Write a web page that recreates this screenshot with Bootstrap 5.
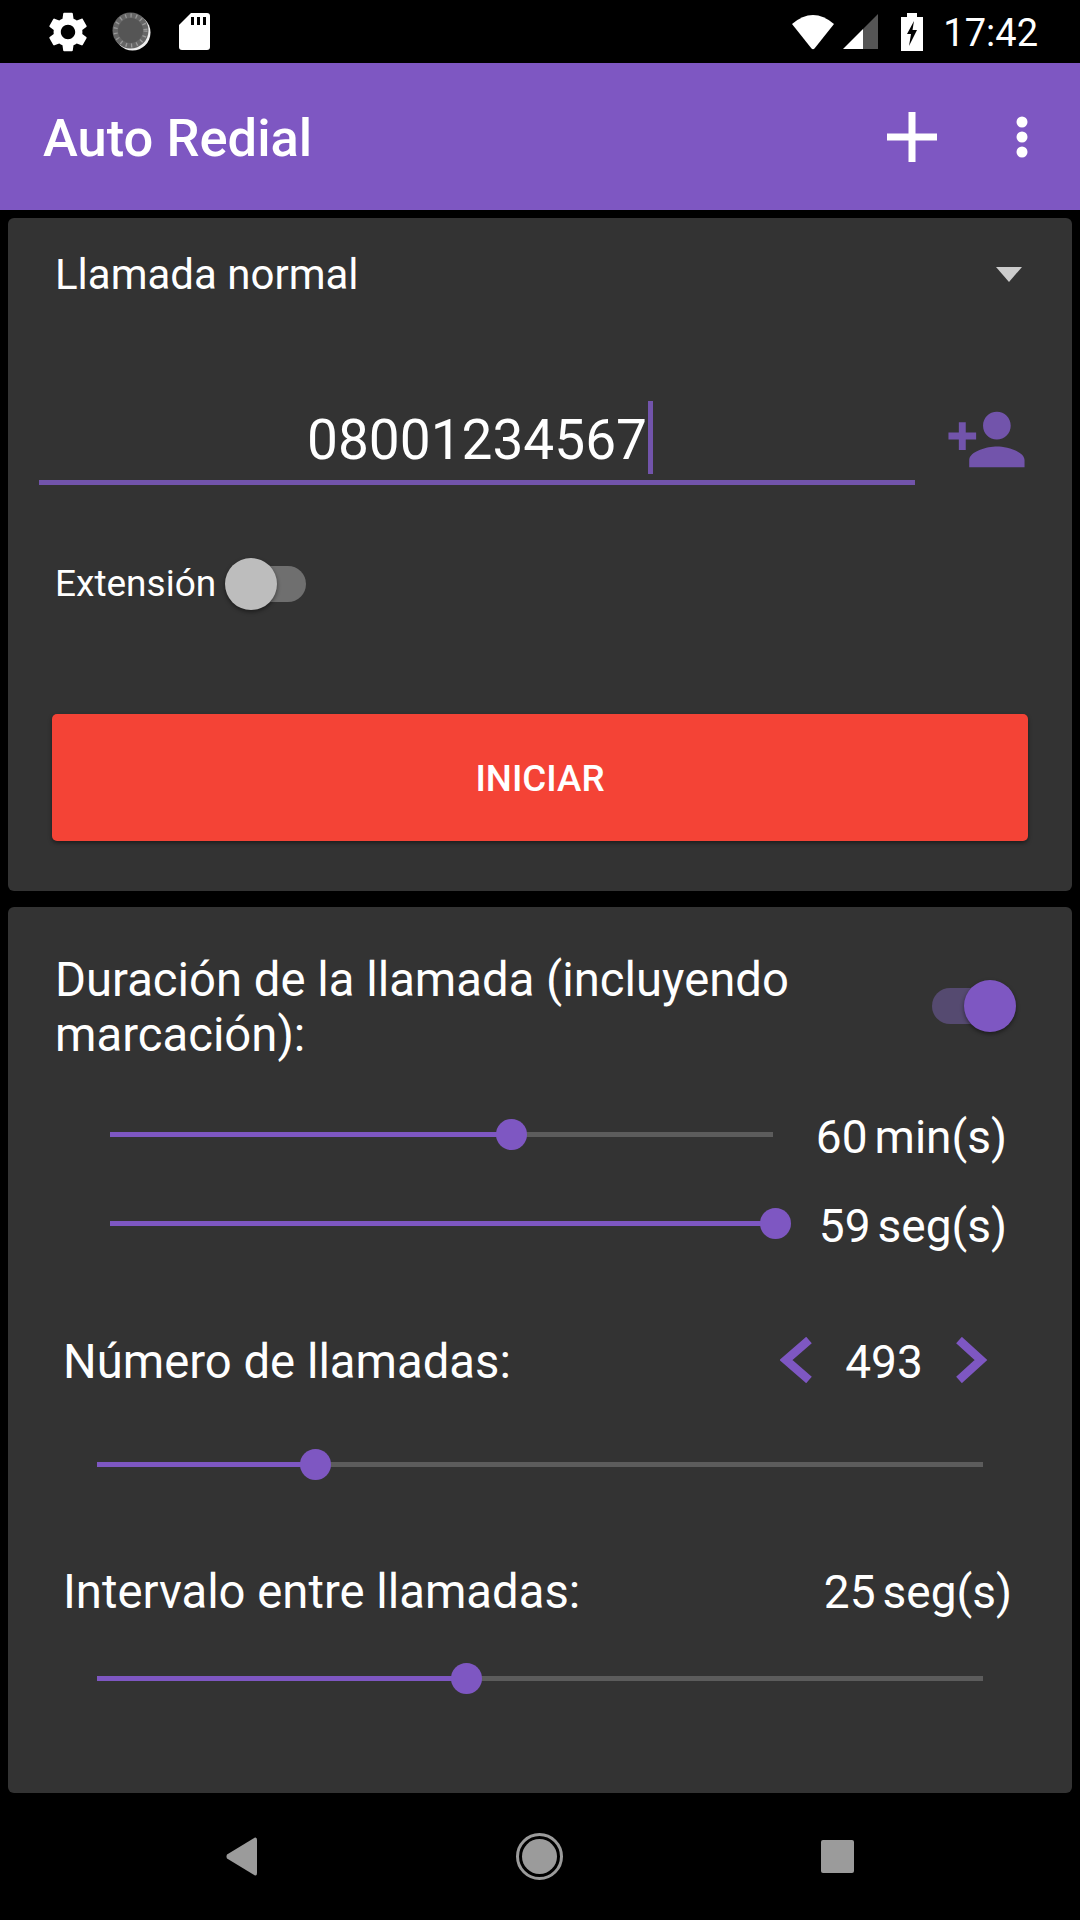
<!DOCTYPE html>
<html lang="es">
<head>
    <meta charset="UTF-8">
    <meta name="viewport" content="width=device-width, initial-scale=1.0">
    <title>Auto Redial</title>
    <link href="https://cdn.jsdelivr.net/npm/bootstrap@5.3.1/dist/css/bootstrap.min.css" rel="stylesheet">
    <style>
        body {
            font-family: Roboto, "Liberation Sans", sans-serif;
            background: #000;
            color: #fff;
            width: 1080px;
            height: 1920px;
            margin: 0;
            overflow: hidden;
        }

        .status-strip { height: 63px; padding: 0 42px 0 44px; }
        .status-time { font-size: 38px; line-height: 1; margin-left: 20px; padding-top: 2px; }

        .app-strip { height: 147px; background: #7e57c2; padding: 0 0 0 43px; }
        .app-title { font-size: 52.5px; font-weight: 500; line-height: 1; margin: 0; padding-top: 4px; }

        .panes { padding: 8px 8px 0; gap: 16px; height: 1583px; }
        .pane { background: #333; border: 0; border-radius: 6px; color: #fff; }
        .pane-a { height: 673px; }
        .pane-b { height: 886px; padding-top: 46px; }

        .mode-row { height: 112px; padding: 0 48px 0 47px; font-size: 42px; }
        .mode-caret { width: 0; height: 0; border-left: 13px solid transparent; border-right: 13px solid transparent; border-top: 15px solid #ccc; margin-right: 2px; }

        .phone-row { padding-left: 31px; margin-top: 65px; }
        .phone-field { width: 876px; height: 90px; border-bottom: 5px solid #7254ab; font-size: 55px; line-height: 1; }
        .phone-num { margin-top: 6px; }
        .phone-cursor { width: 5px; height: 73px; background: #7254ab; margin-left: 1px; margin-right: -6px; }

        .ext-row { height: 70px; padding-left: 47px; margin-top: 64px; font-size: 37px; }

        .go-btn { display: block; width: 976px; height: 127px; margin: 95px 0 0 44px; padding-top: 8px; background: #f44336; border: 0; border-radius: 5px; color: #fff; font-size: 36.75px; font-weight: 500; box-shadow: 0 2px 4px rgba(0, 0, 0, .45); }

        .sw { position: relative; width: 74px; height: 36px; border-radius: 18px; }
        .sw-off { background: #6f6f6f; margin-left: 16px; }
        .sw-on { background: #554a70; margin-bottom: 5px; }
        .sw-knob { position: absolute; top: -8px; width: 52px; height: 52px; border-radius: 50%; box-shadow: 0 2px 4px rgba(0, 0, 0, .45); }
        .sw-off .sw-knob { left: -7px; background: #bdbdbd; }
        .sw-on .sw-knob { right: -10px; background: #7e57c2; }

        .dur-head { padding: 0 66px 0 47px; font-size: 47.25px; line-height: 55px; }
        .dur-head p { margin: 0; width: 780px; }

        .dur-row { height: 89px; padding: 0 65px 0 102px; }
        .dur-row:first-child { margin-top: 27px; }
        .rail { position: relative; height: 5px; background: #5c5c5c; }
        .rail-short { width: 663px; }
        .rail-long { width: 886px; }
        .rail-fill { height: 100%; background: #7e57c2; }
        .rail-thumb { position: absolute; top: -13px; width: 31px; height: 31px; margin-left: -15px; border-radius: 50%; background: #7e57c2; }

        .val { font-size: 46px; line-height: 1; white-space: nowrap; }
        .val span { margin-left: 7px; }
        .dur-row .val { padding-top: 4px; }

        .num-row { height: 100px; padding: 0 84px 0 55px; font-size: 47.25px; }
        .num-val { width: 144px; text-align: center; }
        .chev { margin-bottom: 5px; }
        .rail-row { padding-left: 89px; }

        .nav-strip { height: 127px; padding: 0 226px; }
    </style>
</head>
<body>
    <div class="status-strip d-flex align-items-center justify-content-between">
        <div class="d-flex align-items-center">
            <svg width="48" height="48" viewBox="0 0 24 24" fill="#fff"><path d="M19.14 12.94c.04-.3.06-.61.06-.94 0-.32-.02-.64-.07-.94l2.03-1.58c.18-.14.23-.41.12-.61l-1.92-3.32c-.12-.22-.37-.29-.59-.22l-2.39.96c-.5-.38-1.03-.7-1.62-.94l-.36-2.54c-.04-.24-.24-.41-.48-.41h-3.84c-.24 0-.43.17-.47.41l-.36 2.54c-.59.24-1.13.57-1.62.94l-2.39-.96c-.22-.08-.47 0-.59.22L2.74 8.87c-.12.21-.08.47.12.61l2.03 1.58c-.05.3-.09.63-.09.94s.02.64.07.94l-2.03 1.58c-.18.14-.23.41-.12.61l1.92 3.32c.12.22.37.29.59.22l2.39-.96c.5.38 1.03.7 1.62.94l.36 2.54c.05.24.24.41.48.41h3.84c.24 0 .44-.17.47-.41l.36-2.54c.59-.24 1.13-.56 1.62-.94l2.39.96c.22.08.47 0 .59-.22l1.92-3.32c.12-.22.07-.47-.12-.61l-2.01-1.58zM12 15.6c-1.98 0-3.6-1.62-3.6-3.6s1.62-3.6 3.6-3.6 3.6 1.62 3.6 3.6-1.62 3.6-3.6 3.6z"/></svg>
            <svg style="margin-left:20px" width="40" height="40" viewBox="0 0 40 40"><circle cx="20.500" cy="20.500" r="18" fill="#eee"/><circle cx="18.500" cy="18.500" r="18" fill="#666"/><circle cx="18.500" cy="18.500" r="15" fill="none" stroke="#999" stroke-width="4" stroke-dasharray="1.300 4.100"/><circle cx="18.500" cy="18.500" r="12.500" fill="#555"/></svg>
            <svg style="margin-left:27px" width="31" height="37" viewBox="0 0 31 37"><path d="M12 0H28Q31 0 31 3V34Q31 37 28 37H3Q0 37 0 34V12Z" fill="#fff"/><path d="M12 4h3v8h-3zM18 4h3v8h-3zM24 4h3v8h-3z" fill="#000"/></svg>
        </div>
        <div class="d-flex align-items-center">
            <svg width="44" height="37" viewBox="0 0 44 37"><path d="M1 11Q22 -7 43 11L23.500 35.500Q22 37 20.500 35.500Z" fill="#fff"/></svg>
            <svg class="ms-2" width="35" height="35" viewBox="0 0 35 35"><path d="M0 35L20 15V35Z" fill="#fff"/><path d="M20 15L35 0V35H20Z" fill="#555"/></svg>
            <svg style="margin-left:23px" width="22" height="38" viewBox="0 0 22 38"><path d="M6 0H16V4H22V38H0V4H6Z" fill="#fff"/><path d="M13 8L6 21H10L8 33L16 17H11.500Z" fill="#000"/></svg>
            <span class="status-time">17:42</span>
        </div>
    </div>

    <div class="app-strip d-flex align-items-center justify-content-between">
        <h1 class="app-title">Auto Redial</h1>
        <div class="d-flex align-items-center">
            <svg width="50" height="50" viewBox="0 0 50 50" fill="#fff"><path d="M21.500 0h7v21.500H50v7H28.500V50h-7V28.500H0v-7h21.500z"/></svg>
            <svg style="margin-left:79px;margin-right:52px" width="12" height="42" viewBox="0 0 12 42" fill="#fff"><circle cx="6" cy="6" r="5.500"/><circle cx="6" cy="21" r="5.500"/><circle cx="6" cy="36" r="5.500"/></svg>
        </div>
    </div>

    <div class="panes d-flex flex-column">
        <div class="card pane pane-a">
            <div class="mode-row d-flex align-items-center justify-content-between">
                <span>Llamada normal</span>
                <span class="mode-caret"></span>
            </div>
            <div class="phone-row d-flex">
                <div class="phone-field d-flex align-items-center justify-content-center">
                    <span class="phone-num">08001234567</span><span class="phone-cursor"></span>
                </div>
                <svg style="margin-left:30px;margin-top:2px" width="83" height="85" viewBox="0 0 24 24" fill="#7254ab"><path d="M15 12c2.210 0 4-1.790 4-4s-1.790-4-4-4-4 1.790-4 4 1.790 4 4 4zm-9-2V7H4v3H1v2h3v3h2v-3h3v-2H6zm9 4c-2.670 0-8 1.340-8 4v2h16v-2c0-2.660-5.330-4-8-4z"/></svg>
            </div>
            <div class="ext-row d-flex align-items-center">
                <span>Extensión</span>
                <div class="sw sw-off"><div class="sw-knob"></div></div>
            </div>
            <button class="btn go-btn" type="button">INICIAR</button>
        </div>

        <div class="card pane pane-b">
            <div class="dur-head d-flex justify-content-between align-items-center">
                <p>Duración de la llamada (incluyendo marcación):</p>
                <div class="sw sw-on"><div class="sw-knob"></div></div>
            </div>
            <div class="dur-block">
                <div class="dur-row d-flex align-items-center justify-content-between">
                    <div class="rail rail-short"><div class="rail-fill" style="width:60.500%"></div><div class="rail-thumb" style="left:60.500%"></div></div>
                    <div class="val">60<span>min(s)</span></div>
                </div>
                <div class="dur-row d-flex align-items-center justify-content-between">
                    <div class="rail rail-short"><div class="rail-fill" style="width:100%"></div><div class="rail-thumb" style="left:100.300%"></div></div>
                    <div class="val">59<span>seg(s)</span></div>
                </div>
            </div>
            <div class="num-row d-flex align-items-center justify-content-between" style="margin-top:42px;padding-top:4px">
                <span>Número de llamadas:</span>
                <div class="d-flex align-items-center">
                    <svg class="chev" width="32" height="46" viewBox="0 0 32 46"><path d="M29 3L6 23L29 43" fill="none" stroke="#7e57c2" stroke-width="8.500"/></svg>
                    <span class="num-val val">493</span>
                    <svg class="chev" width="32" height="46" viewBox="0 0 32 46"><path d="M3 3L25 23L3 43" fill="none" stroke="#7e57c2" stroke-width="8.500"/></svg>
                </div>
            </div>
            <div class="rail-row d-flex align-items-center" style="height:108px">
                <div class="rail rail-long"><div class="rail-fill" style="width:24.600%"></div><div class="rail-thumb" style="left:24.600%"></div></div>
            </div>
            <div class="num-row d-flex align-items-center justify-content-between" style="margin-top:24px;padding-right:60px">
                <span>Intervalo entre llamadas:</span>
                <div class="val">25<span>seg(s)</span></div>
            </div>
            <div class="rail-row d-flex align-items-center" style="height:72px">
                <div class="rail rail-long"><div class="rail-fill" style="width:41.700%"></div><div class="rail-thumb" style="left:41.700%"></div></div>
            </div>
        </div>
    </div>

    <div class="nav-strip d-flex align-items-center justify-content-between">
        <svg width="31" height="39" viewBox="0 0 31 39"><path d="M29 0.500Q31 0 31 3V36Q31 39 29 38.500L1 21.500Q0 19.500 1 17.500Z" fill="#9b9b9b"/></svg>
        <svg width="47" height="47" viewBox="0 0 47 47"><circle cx="23.500" cy="23.500" r="22" fill="none" stroke="#9b9b9b" stroke-width="3"/><circle cx="23.500" cy="23.500" r="17.500" fill="#9b9b9b"/></svg>
        <svg width="33" height="33" viewBox="0 0 33 33"><rect width="33" height="33" rx="2" fill="#9b9b9b"/></svg>
    </div>
</body>
</html>
